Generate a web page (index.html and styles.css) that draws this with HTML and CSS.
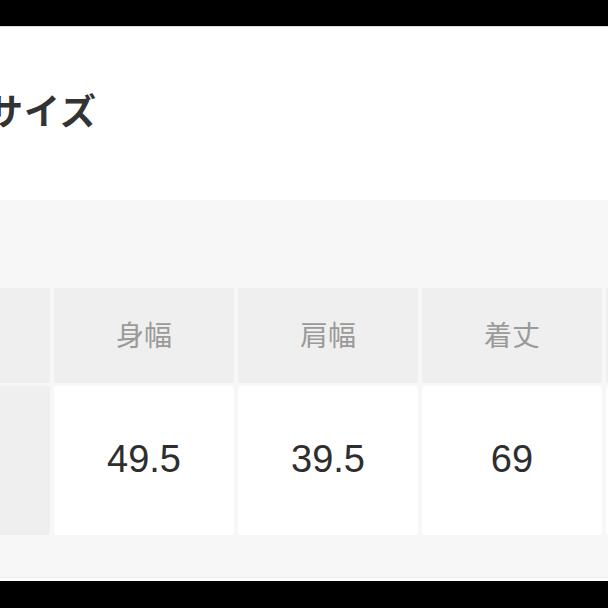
FILE: index.html
```html
<!DOCTYPE html>
<html lang="ja">
<head>
<meta charset="utf-8">
<title>サイズ</title>
<link rel="stylesheet" href="styles.css">
</head>
<body>
<div class="bar bar-top"></div>
<section class="title-area">
  <h2 class="title">サイズ</h2>
</section>
<section class="table-area">
  <div class="size-table">
    <div class="cell head label"></div>
    <div class="cell head">身幅</div>
    <div class="cell head">肩幅</div>
    <div class="cell head">着丈</div>
    <div class="cell head"></div>
    <div class="cell value label"></div>
    <div class="cell value">49.5</div>
    <div class="cell value">39.5</div>
    <div class="cell value">69</div>
    <div class="cell value"></div>
  </div>
</section>
<div class="bottom-line"></div>
<div class="bar bar-bottom"></div>
</body>
</html>
```

FILE: styles.css
```css
html, body {
  margin: 0;
  padding: 0;
}
body {
  width: 608px;
  height: 608px;
  overflow: hidden;
  background: #ffffff;
  font-family: "Noto Sans CJK JP", "Liberation Sans", sans-serif;
}
.bar {
  background: #000;
}
.bar-top {
  height: 26px;
  border-bottom: 1px solid #d8d8d8;
}
.bar-bottom {
  height: 27px;
}
.title-area {
  height: 173px;
  overflow: hidden;
}
.title {
  margin: 64px 0 0 -13px;
  font-size: 36px;
  line-height: 37px;
  font-weight: 700;
  color: #333;
  letter-spacing: 1px;
}
.table-area {
  height: 377px;
  background: #f7f7f7;
  padding-top: 88px;
  box-sizing: border-box;
  overflow: hidden;
}
.size-table {
  display: grid;
  grid-template-columns: 50px 180px 180px 180px 180px;
  grid-template-rows: 95px 149px;
  column-gap: 4px;
  row-gap: 3px;
  width: max-content;
}
.cell {
  display: flex;
  align-items: center;
  justify-content: center;
}
.head {
  background: #efefef;
  color: #9a9a9a;
  font-size: 28px;
  font-family: "Noto Sans CJK JP", sans-serif;
  padding-bottom: 4px;
  box-sizing: border-box;
}
.value {
  background: #fff;
  border-radius: 4px;
  color: #2e2e2e;
  font-family: "Liberation Sans", Arial, sans-serif;
  font-size: 38px;
  padding-bottom: 2px;
  box-sizing: border-box;
}
.value.label {
  background: #efefef;
  border-radius: 0;
}
.bottom-line {
  height: 4px;
  background: #fbfbfb;
  border-top: 1px solid #ececec;
  box-sizing: border-box;
}
```
